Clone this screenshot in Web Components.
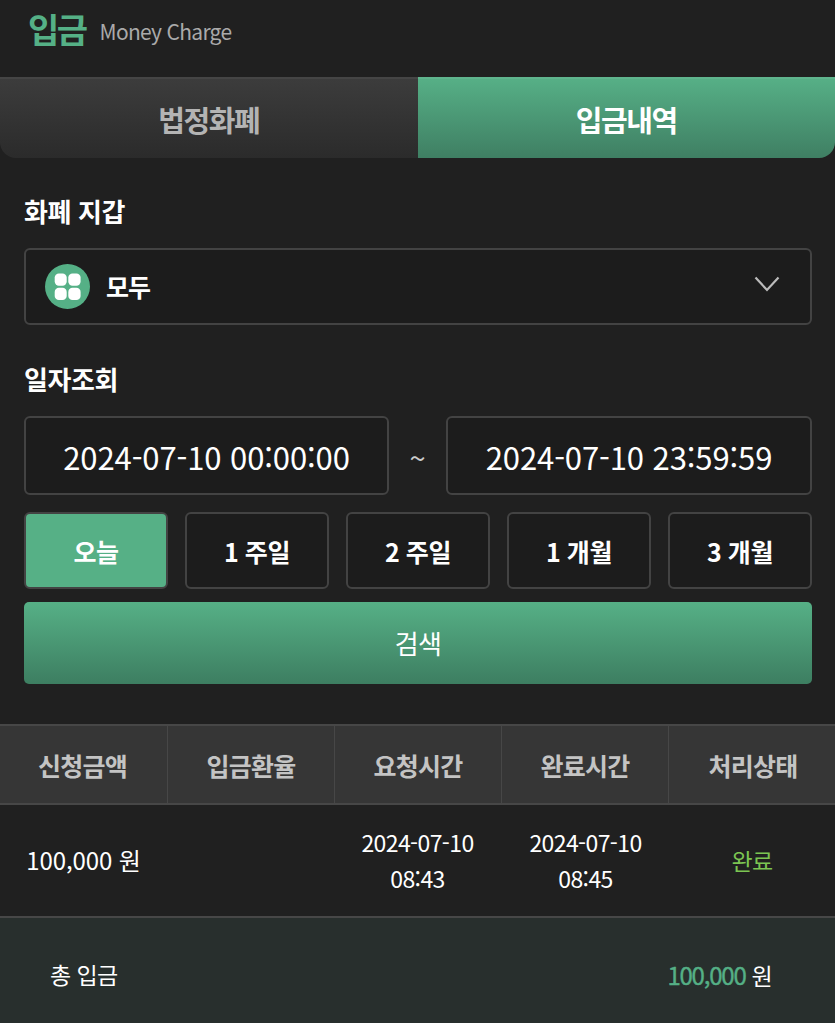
<!DOCTYPE html>
<html lang="ko">
<head>
<meta charset="utf-8">
<title>입금</title>
<style>
  html, body { margin: 0; background: #202020; }
  body { font-family: "Noto Sans CJK KR", "Noto Sans", sans-serif; color: #fff; width: 835px; height: 1023px; overflow: hidden; }
</style>
</head>
<body>
<money-page></money-page>
<script>
class PageHeader extends HTMLElement {
  constructor() {
    super();
    this.attachShadow({ mode: 'open' }).innerHTML = `
      <style>
        :host { display: flex; align-items: center; height: 77px; box-sizing: border-box; padding: 0 0 20px 28px; }
        b { font-size: 34px; font-weight: 700; color: #55b086; letter-spacing: -2.5px; margin-right: 14px; }
        span { font-size: 21px; color: #aaa; letter-spacing: -0.7px; padding-top: 5px; }
      </style>
      <b>입금</b><span>Money Charge</span>
    `;
  }
}

class TabBar extends HTMLElement {
  constructor() {
    super();
    this.attachShadow({ mode: 'open' }).innerHTML = `
      <style>
        :host { display: flex; height: 81px; }
        div { flex: 1; display: flex; align-items: center; justify-content: center; font-size: 29px; font-weight: 700; letter-spacing: -1.4px; box-sizing: border-box; }
        .off { color: #b4b4b4; background: linear-gradient(#3c3c3c, #2b2b2b); border-top: 2px solid #454545; border-bottom-left-radius: 16px; }
        .on { color: #fff; background: linear-gradient(#56af86, #3f7f63); border-top: 2px solid #5fb48d; border-bottom-right-radius: 16px; }
      </style>
      <div class="off">법정화폐</div><div class="on">입금내역</div>
    `;
  }
}

class FieldLabel extends HTMLElement {
  constructor() {
    super();
    this.attachShadow({ mode: 'open' }).innerHTML = `
      <style>
        :host { display: block; font-size: 26px; line-height: 36px; font-weight: 700; letter-spacing: -0.4px; color: #fff; }
      </style>
      <slot></slot>
    `;
  }
}

class WalletSelect extends HTMLElement {
  constructor() {
    super();
    this.attachShadow({ mode: 'open' }).innerHTML = `
      <style>
        :host { display: flex; align-items: center; height: 77px; box-sizing: border-box; background: #1c1c1c; border: 2px solid #434343; border-radius: 6px; padding: 0 30px 0 19px; }
        svg.coin { width: 45px; height: 45px; flex: none; margin-right: 16px; margin-top: -1px; }
        span { flex: 1; font-size: 25px; font-weight: 700; letter-spacing: -1px; padding-bottom: 2px; }
        svg.arrow { width: 26px; height: 16px; flex: none; margin-top: -5px; }
      </style>
      <svg class="coin" viewBox="0 0 45 45">
        <circle cx="22.5" cy="22.5" r="22.5" fill="#55b086"/>
        <rect x="9.7" y="9.400" width="12" height="12.300" rx="4.200" fill="#fff"/>
        <rect x="23.3" y="9.400" width="12.300" height="12.300" rx="4.200" fill="#fff"/>
        <rect x="9.7" y="23.800" width="12" height="12.300" rx="4.200" fill="#fff"/>
        <rect x="23.3" y="23.800" width="12.300" height="12.300" rx="4.200" fill="#fff"/>
      </svg>
      <span><slot></slot></span>
      <svg class="arrow" viewBox="0 0 26 16"><path d="M1.5 1.5 L13 14 L24.500 1.500" fill="none" stroke="#bbb" stroke-width="2.2"/></svg>
    `;
  }
}

class DateRange extends HTMLElement {
  constructor() {
    super();
    this.attachShadow({ mode: 'open' }).innerHTML = `
      <style>
        :host { display: grid; grid-template-columns: 365px 1fr 366px; align-items: center; }
        div { height: 79px; box-sizing: border-box; background: #1c1c1c; border: 2px solid #434343; border-radius: 6px; display: flex; align-items: center; justify-content: center; font-size: 31px; letter-spacing: -0.1px; color: #fff; padding-top: 2px; }
        span { text-align: center; font-size: 29px; color: #ccc; padding-top: 2px; }
      </style>
      <div>2024-07-10 00:00:00</div><span>~</span><div>2024-07-10 23:59:59</div>
    `;
  }
}

class PeriodButton extends HTMLElement {
  constructor() {
    super();
    this.attachShadow({ mode: 'open' }).innerHTML = `
      <style>
        :host { display: flex; align-items: center; justify-content: center; height: 77px; box-sizing: border-box; background: #1c1c1c; border: 2px solid #434343; border-radius: 6px; font-size: 25px; font-weight: 700; letter-spacing: -0.4px; color: #fff; }
        :host([active]) { background: #56b086; }
      </style>
      <slot></slot>
    `;
  }
}

class PeriodGroup extends HTMLElement {
  constructor() {
    super();
    this.attachShadow({ mode: 'open' }).innerHTML = `
      <style>
        :host { display: grid; grid-template-columns: repeat(5, 1fr); gap: 17px; }
      </style>
      <slot></slot>
    `;
  }
}

class SearchButton extends HTMLElement {
  constructor() {
    super();
    this.attachShadow({ mode: 'open' }).innerHTML = `
      <style>
        :host { display: flex; align-items: center; justify-content: center; height: 82px; box-sizing: border-box; padding-bottom: 2px; border-radius: 5px; background: linear-gradient(#56b086, #3d7e61); font-size: 26px; color: #fff; letter-spacing: -0.6px; }
      </style>
      <slot></slot>
    `;
  }
}

class DepositTable extends HTMLElement {
  constructor() {
    super();
    this.attachShadow({ mode: 'open' }).innerHTML = `
      <style>
        :host { display: block; }
        .row { display: grid; grid-template-columns: repeat(5, 1fr); }
        .head { height: 81px; box-sizing: border-box; background: #363636; border-top: 2px solid #474747; border-bottom: 2px solid #474747; color: #c4c4c4; font-size: 25px; font-weight: 700; letter-spacing: -0.8px; }
        .head div { display: flex; align-items: center; justify-content: center; border-left: 1px solid #474747; }
        .head div:first-child { border-left: 0; padding-right: 2px; }
        .head div:last-child { padding-left: 2px; }
        .body { height: 113px; box-sizing: border-box; padding-bottom: 2px; border-bottom: 2px solid #474747; font-size: 23px; letter-spacing: -0.6px; line-height: 36px; color: #fff; }
        .body div { display: flex; align-items: center; justify-content: center; text-align: center; }
        .amount { font-size: 24px; letter-spacing: -0.1px; }
        .finish { padding-left: 2px; }
        .done { color: #7cc552; padding-left: 1px; }
      </style>
      <div class="row head"><div>신청금액</div><div>입금환율</div><div>요청시간</div><div>완료시간</div><div>처리상태</div></div>
      <div class="row body">
        <div class="amount">100,000 원</div><div></div>
        <div>2024-07-10<br>08:43</div><div class="finish">2024-07-10<br>08:45</div>
        <div class="done">완료</div>
      </div>
    `;
  }
}

class TotalBar extends HTMLElement {
  constructor() {
    super();
    this.attachShadow({ mode: 'open' }).innerHTML = `
      <style>
        :host { display: flex; align-items: center; justify-content: space-between; height: 106px; box-sizing: border-box; padding: 6px 63px 0 50px; background: #282f2d; font-size: 23px; letter-spacing: -0.6px; color: #fff; }
        b { font-weight: 400; -webkit-text-stroke: 0.4px #55b086; color: #55b086; font-size: 24px; letter-spacing: -1.2px; }
      </style>
      <span>총 입금</span><span><b>100,000</b> 원</span>
    `;
  }
}

class MoneyPage extends HTMLElement {
  constructor() {
    super();
    this.attachShadow({ mode: 'open' }).innerHTML = `
      <style>
        :host { display: block; }
        .form { padding: 35px 23px 40px 24px; display: flex; flex-direction: column; }
        field-label { margin-bottom: 19px; }
        wallet-select { margin-bottom: 36px; }
        date-range { margin-bottom: 17px; }
        period-group { margin-bottom: 13px; }
      </style>
      <page-header></page-header>
      <tab-bar></tab-bar>
      <div class="form">
        <field-label>화폐 지갑</field-label>
        <wallet-select>모두</wallet-select>
        <field-label>일자조회</field-label>
        <date-range></date-range>
        <period-group>
          <period-button active>오늘</period-button>
          <period-button>1 주일</period-button>
          <period-button>2 주일</period-button>
          <period-button>1 개월</period-button>
          <period-button>3 개월</period-button>
        </period-group>
        <search-button>검색</search-button>
      </div>
      <deposit-table></deposit-table>
      <total-bar></total-bar>
    `;
  }
}

customElements.define('page-header', PageHeader);
customElements.define('tab-bar', TabBar);
customElements.define('field-label', FieldLabel);
customElements.define('wallet-select', WalletSelect);
customElements.define('date-range', DateRange);
customElements.define('period-button', PeriodButton);
customElements.define('period-group', PeriodGroup);
customElements.define('search-button', SearchButton);
customElements.define('deposit-table', DepositTable);
customElements.define('total-bar', TotalBar);
customElements.define('money-page', MoneyPage);
</script>
</body>
</html>
